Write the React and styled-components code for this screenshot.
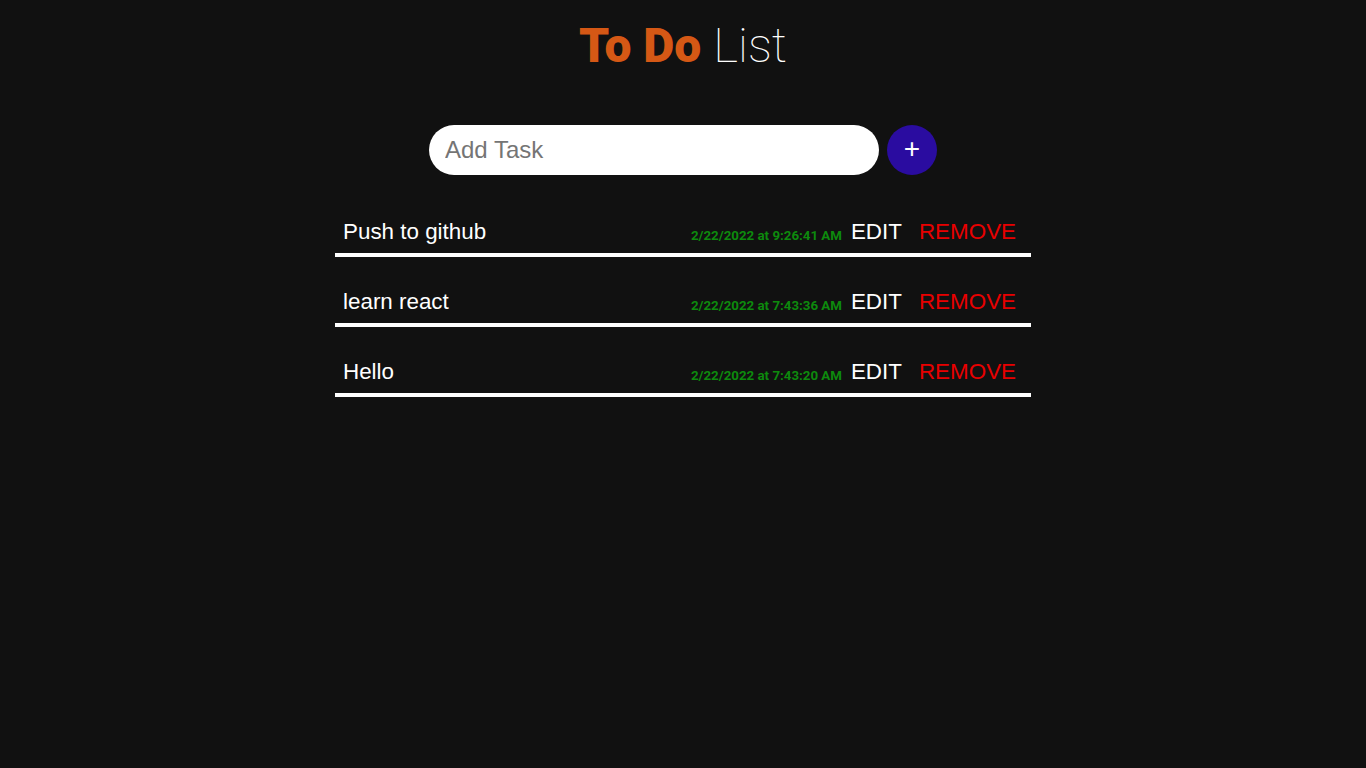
import React, { useState } from "react";
import styled, { createGlobalStyle } from "styled-components";

const Global = createGlobalStyle`
  html, body { margin: 0; padding: 0; background: #111111; }
  body { font-family: "Liberation Sans", Arial, sans-serif; color: #fff; }
  * { box-sizing: border-box; }
`;

const Page = styled.div`
  min-height: 768px;
  display: flex;
  flex-direction: column;
  align-items: center;
  padding-top: 18px;
`;

const Title = styled.h1`
  margin: 0;
  font-family: Roboto, sans-serif;
  font-size: 48px;
  line-height: 56px;
  text-align: center;
`;

const Bold = styled.span`
  font-weight: 900;
  color: #d55815;
`;

const Thin = styled.span`
  font-weight: 100;
  color: #ffffff;
`;

const Form = styled.form`
  margin-top: 51px;
  display: flex;
  gap: 8px;
  align-items: center;
`;

const Input = styled.input`
  width: 450px;
  height: 50px;
  border: none;
  outline: none;
  border-radius: 25px;
  background: #fff;
  padding: 0 16px;
  font-family: "Liberation Sans", Arial, sans-serif;
  font-size: 24px;
  color: #222;
  &::placeholder { color: #757575; }
`;

const AddButton = styled.button`
  width: 50px;
  height: 50px;
  border-radius: 50%;
  border: none;
  background: #2a0ca0;
  color: #fff;
  font-family: "Liberation Sans", Arial, sans-serif;
  font-size: 28px;
  line-height: 1;
  display: flex;
  align-items: center;
  justify-content: center;
  padding: 0 0 2px;
  cursor: pointer;
`;

const List = styled.ul`
  list-style: none;
  margin: 36px 0 0;
  padding: 0;
  width: 696px;
  display: flex;
  flex-direction: column;
  gap: 24px;
`;

const Row = styled.li`
  height: 46px;
  border-bottom: 4px solid #fff;
  display: flex;
  align-items: center;
  padding: 0 15px 0 8px;
`;

const TaskText = styled.span`
  flex: 1;
  font-size: 22.4px;
  color: #fff;
`;

const Stamp = styled.span`
  font-family: Roboto, sans-serif;
  font-weight: 700;
  font-size: 13.3px;
  color: #0d8a0d;
  margin-top: 6px;
  margin-right: 9px;
`;

const Action = styled.button`
  background: none;
  border: none;
  padding: 0;
  font-family: "Liberation Sans", Arial, sans-serif;
  font-size: 22.4px;
  color: ${(p) => (p.$danger ? "#e80000" : "#ffffff")};
  margin-left: ${(p) => (p.$danger ? "17px" : "0")};
  cursor: pointer;
`;

const initial = [
  { id: 1, text: "Push to github", time: "2/22/2022 at 9:26:41 AM" },
  { id: 2, text: "learn react", time: "2/22/2022 at 7:43:36 AM" },
  { id: 3, text: "Hello", time: "2/22/2022 at 7:43:20 AM" },
];

export default function App() {
  const [tasks] = useState(initial);
  return (
    <Page>
      <Global />
      <Title>
        <Bold>To Do</Bold> <Thin>List</Thin>
      </Title>
      <Form onSubmit={(e) => e.preventDefault()}>
        <Input placeholder="Add Task" />
        <AddButton type="submit">+</AddButton>
      </Form>
      <List>
        {tasks.map((t) => (
          <Row key={t.id}>
            <TaskText>{t.text}</TaskText>
            <Stamp>{t.time}</Stamp>
            <Action>EDIT</Action>
            <Action $danger>REMOVE</Action>
          </Row>
        ))}
      </List>
    </Page>
  );
}
